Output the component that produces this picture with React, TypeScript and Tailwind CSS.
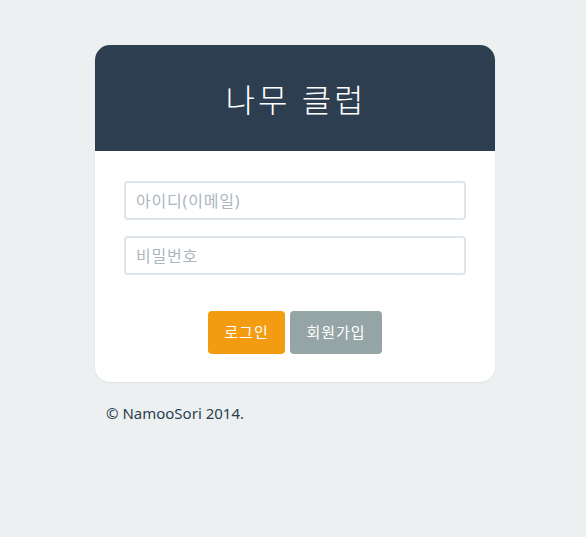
export default function App() {
  return (
    <div
      className="min-h-screen w-full bg-[#ecf0f1] pl-[4px] pt-[45px]"
      style={{ fontFamily: '"Noto Sans", "Noto Sans CJK KR", sans-serif' }}
    >
      <div className="mx-auto w-[400px]">
        <div className="overflow-hidden rounded-[15px] bg-white shadow-[0_1px_2px_rgba(0,0,0,0.06)]">
          <div className="flex h-[106px] items-center justify-center bg-[#2c3e50] pl-[2px] pt-[4px]">
            <h1 className="text-[32px] font-light leading-none tracking-[3px] text-white">나무 클럽</h1>
          </div>
          <form className="px-[29px] pb-[28px] pt-[30px]">
            <div className="flex flex-col gap-4">
              <input
                type="text"
                placeholder="아이디(이메일)"
                className="h-[39px] w-full rounded-[4px] border-2 border-[#dce4ec] px-[10px] text-[16px] tracking-[0.8px] text-[#2c3e50] outline-none placeholder:text-[#acb6c0]"
              />
              <input
                type="password"
                placeholder="비밀번호"
                className="h-[39px] w-full rounded-[4px] border-2 border-[#dce4ec] px-[10px] text-[16px] tracking-[0.8px] text-[#2c3e50] outline-none placeholder:text-[#acb6c0]"
              />
            </div>
            <div className="mt-[36px] flex justify-center gap-[5px]">
              <button
                type="submit"
                className="h-[43px] w-[77px] rounded-[4px] bg-[#f39c12] text-[15px] tracking-[1px] text-white"
              >
                로그인
              </button>
              <button
                type="button"
                className="h-[43px] w-[92px] rounded-[4px] bg-[#95a5a6] text-[15px] tracking-[1px] text-white"
              >
                회원가입
              </button>
            </div>
          </form>
        </div>
        <p className="mt-[21px] pl-[11px] text-[15px] leading-5 text-[#2c3e50]">© NamooSori 2014.</p>
      </div>
    </div>
  );
}
